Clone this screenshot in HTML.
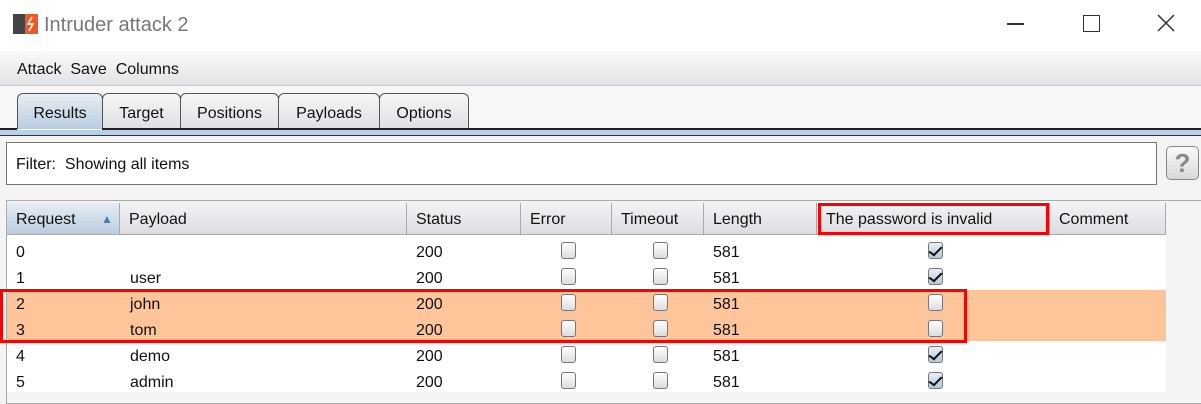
<!DOCTYPE html>
<html><head><meta charset="utf-8"><style>
*{margin:0;padding:0;box-sizing:border-box}
body{width:1201px;height:404px;background:#f4f4f4;font-family:"Liberation Sans",Arial,sans-serif;font-size:16px;color:#111;position:relative;overflow:hidden}
.a{position:absolute}
.title{left:0;top:0;width:1201px;height:50px;background:#fff}
.menu{left:0;top:50px;width:1201px;height:36px;background:linear-gradient(#fafafa,#e2e3e6);border-bottom:1px solid #c8c8c8}
.tabs{left:0;top:86px;width:1201px;height:44px;background:#f7f7f7}
.tab{top:93px;height:36px;border:1px solid #555;border-bottom:none;border-radius:6px 6px 0 0;background:linear-gradient(#f6f6f8,#dfe0e4);text-align:center;line-height:39px}
.tab.sel{background:linear-gradient(#e8eef4,#b9cde0)}
.hd{top:203px;height:32px;background:linear-gradient(#f2f3f5,#dcdde1);border-right:1px solid #aaa;border-bottom:1px solid #aaa;line-height:33px;padding-left:9px}
.cb{width:15px;height:17px;border:1.5px solid #777;border-radius:3px;background:linear-gradient(#fff,#dcdcdc)}
.cb.on{background:linear-gradient(#e8eef6,#b7c7da)}
.cb.on::after{content:"";position:absolute;left:3px;top:1px;width:5px;height:10px;border-right:2px solid #111;border-bottom:2px solid #111;transform:rotate(35deg) skewX(-10deg)}
.t{line-height:26px}
</style></head><body>
<div class="a title"></div>
<svg class="a" style="left:13px;top:12px" width="28" height="24"><rect x="0" y="2" width="13" height="20" fill="#444"/><rect x="12" y="2" width="13" height="20" fill="#f05a22"/><path d="M19 5 L15 12 L20 12 L16 19" stroke="#fff" stroke-width="1.5" fill="none"/></svg>
<div class="a" style="left:44px;top:14px;font-size:20px;color:#777">Intruder attack 2</div>
<div class="a" style="left:1007px;top:23px;width:17px;height:1.5px;background:#333"></div>
<div class="a" style="left:1083px;top:15px;width:17px;height:17px;border:1.5px solid #333"></div>
<svg class="a" style="left:1157px;top:14px" width="18" height="18"><path d="M1 1L17 17M17 1L1 17" stroke="#333" stroke-width="1.5"/></svg>
<div class="a menu"></div>
<div class="a" style="left:17px;top:61px">Attack&nbsp;&nbsp;Save&nbsp;&nbsp;Columns</div>
<div class="a tabs"></div>
<div class="a tab sel" style="left:17px;width:86px">Results</div>
<div class="a tab" style="left:102px;width:79px">Target</div>
<div class="a tab" style="left:180px;width:99px">Positions</div>
<div class="a tab" style="left:278px;width:102px">Payloads</div>
<div class="a tab" style="left:379px;width:90px">Options</div>
<div class="a" style="left:0;top:128px;width:17px;height:2px;background:#222"></div>
<div class="a" style="left:102px;top:128px;width:1099px;height:2px;background:#222"></div>
<div class="a" style="left:0;top:130px;width:1201px;height:5px;background:#bcd0e4"></div>
<div class="a" style="left:0;top:135px;width:1201px;height:1px;background:#333"></div>
<div class="a" style="left:6px;top:142px;width:1151px;height:43px;border:1px solid #777;background:#fff;padding-left:9px;line-height:44px">Filter:&nbsp; Showing all items</div>
<div class="a" style="left:1166px;top:146px;width:33px;height:34px;border:1px solid #888;border-radius:5px;background:linear-gradient(#fafafa,#d8d8d8);color:#888;font-size:26px;font-weight:bold;text-align:center;line-height:32px">?</div>
<div class="a" style="left:6px;top:200px;width:1195px;height:204px;border:1px solid #aaa;border-right:none;background:#f4f4f4"></div>
<div class="a" style="left:7px;top:235px;width:1159px;height:157px;background:#fff"></div>
<div class="a" style="left:7px;top:290px;width:1159px;height:51px;background:#fec49a"></div>
<div class="a hd" style="left:7px;width:113px;background:linear-gradient(#e6edf4,#b9cde0)">Request<span style="position:absolute;left:94px;top:0;font-size:12px;color:#4a7db0">▲</span></div>
<div class="a hd" style="left:120px;width:287px">Payload</div>
<div class="a hd" style="left:407px;width:114px">Status</div>
<div class="a hd" style="left:521px;width:91px">Error</div>
<div class="a hd" style="left:612px;width:92px">Timeout</div>
<div class="a hd" style="left:704px;width:113px">Length</div>
<div class="a hd" style="left:817px;width:233px">The password is invalid</div>
<div class="a hd" style="left:1050px;width:116px">Comment</div>
<div class="a" style="left:818px;top:203px;width:231px;height:32px;border:3px solid #f00"></div>
<div id="rows"></div>
<div class="a" style="left:0;top:289px;width:967px;height:54px;border:3px solid #f00"></div>
<script>
var d=[["0","",1],["1","user",1],["2","john",0],["3","tom",0],["4","demo",1],["5","admin",1]],h="";
d.forEach(function(r,i){var y=240+i*26;
h+='<div class="a t" style="left:16px;top:'+y+'px">'+r[0]+'</div><div class="a t" style="left:130px;top:'+y+'px">'+r[1]+'</div><div class="a t" style="left:416px;top:'+y+'px">200</div><div class="a t" style="left:713px;top:'+y+'px">581</div>';
h+='<div class="a cb" style="left:561px;top:'+(y+2)+'px"></div><div class="a cb" style="left:653px;top:'+(y+2)+'px"></div><div class="a cb'+(r[2]?' on':'')+'" style="left:928px;top:'+(y+2)+'px"></div>';});
document.getElementById("rows").outerHTML=h;
</script>
</body></html>
